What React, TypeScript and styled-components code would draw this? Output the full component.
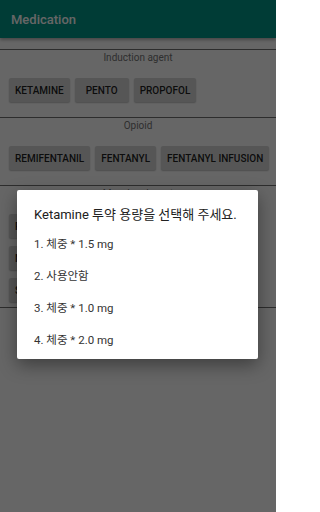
import React from 'react';
import styled, { createGlobalStyle } from 'styled-components';

const GlobalStyle = createGlobalStyle`
  html, body {
    margin: 0;
    padding: 0;
    background-color: #ffffff;
  }
  body {
    font-family: Roboto, "Noto Sans CJK KR", sans-serif;
  }
`;

const Screen = styled.div`
  position: relative;
  width: 276px;
  height: 512px;
  background-color: #ffffff;
  overflow: hidden;
`;

const AppBar = styled.div`
  height: 38px;
  display: flex;
  align-items: center;
  padding-left: 11px;
  background-color: #009688;
  color: #ffffff;
  font-size: 13px;
  font-weight: 500;
  box-shadow: 0 2px 3px rgba(0, 0, 0, 0.3);
`;

const Content = styled.div`
  padding-top: 11px;
`;

const Section = styled.div<{ $bottom: number }>`
  border-top: 1px solid #707070;
  padding-bottom: ${(p) => p.$bottom}px;
  display: flex;
  flex-direction: column;
`;

const Label = styled.div`
  height: 14px;
  line-height: 14px;
  margin-top: 1px;
  margin-bottom: 13px;
  text-align: center;
  font-size: 10px;
  color: #757575;
`;

const Rows = styled.div`
  display: flex;
  flex-direction: column;
  gap: 8px;
  padding-left: 9px;
`;

const Row = styled.div`
  display: flex;
  gap: 5px;
`;

const DrugButton = styled.button`
  height: 24px;
  min-width: 54px;
  padding: 0 6px;
  border: none;
  border-radius: 2px;
  background-color: #d6d7d7;
  color: rgba(0, 0, 0, 0.87);
  font-family: Roboto, sans-serif;
  font-size: 10px;
  font-weight: 500;
  white-space: nowrap;
  box-shadow: 0 1px 1.5px rgba(0, 0, 0, 0.25);
`;

const Scrim = styled.div`
  position: absolute;
  inset: 0;
  background-color: rgba(0, 0, 0, 0.6);
  display: flex;
  justify-content: center;
  align-items: flex-start;
  padding-top: 190px;
`;

const Dialog = styled.div`
  width: 241px;
  margin-left: -1px;
  background-color: #ffffff;
  border-radius: 2px;
  box-shadow: 0 6px 18px rgba(0, 0, 0, 0.4);
  padding: 13px 0 4px;
`;

const DialogTitle = styled.div`
  padding: 0 17px;
  height: 24px;
  line-height: 24px;
  font-size: 13px;
  color: #212121;
`;

const Option = styled.div`
  height: 32px;
  display: flex;
  align-items: center;
  padding: 0 17px;
  font-size: 11.5px;
  color: #333333;
`;

const sections = [
  {
    label: 'Induction agent',
    rows: [['KETAMINE', 'PENTO', 'PROPOFOL']],
    bottom: 15,
  },
  {
    label: 'Opioid',
    rows: [['REMIFENTANIL', 'FENTANYL', 'FENTANYL INFUSION']],
    bottom: 15,
  },
  {
    label: 'Muscle relaxant',
    rows: [
      ['ROCURONIUM', 'VECURONIUM'],
      ['NEOSTIGMINE', 'ATROPINE', 'GLYCOPYRROLATE'],
      ['SUGAMMADEX'],
    ],
    bottom: 5,
  },
];

const options = ['1. 체중 * 1.5 mg', '2. 사용안함', '3. 체중 * 1.0 mg', '4. 체중 * 2.0 mg'];

const App: React.FC = () => {
  return (
    <Screen>
      <GlobalStyle />
      <AppBar>Medication</AppBar>
      <Content>
        {sections.map((s) => (
          <Section key={s.label} $bottom={s.bottom}>
            <Label>{s.label}</Label>
            <Rows>
              {s.rows.map((row, i) => (
                <Row key={i}>
                  {row.map((name) => (
                    <DrugButton key={name}>{name}</DrugButton>
                  ))}
                </Row>
              ))}
            </Rows>
          </Section>
        ))}
        <Section $bottom={0} />
      </Content>
      <Scrim>
        <Dialog>
          <DialogTitle>Ketamine 투약 용량을 선택해 주세요.</DialogTitle>
          {options.map((o) => (
            <Option key={o}>{o}</Option>
          ))}
        </Dialog>
      </Scrim>
    </Screen>
  );
};

export default App;
